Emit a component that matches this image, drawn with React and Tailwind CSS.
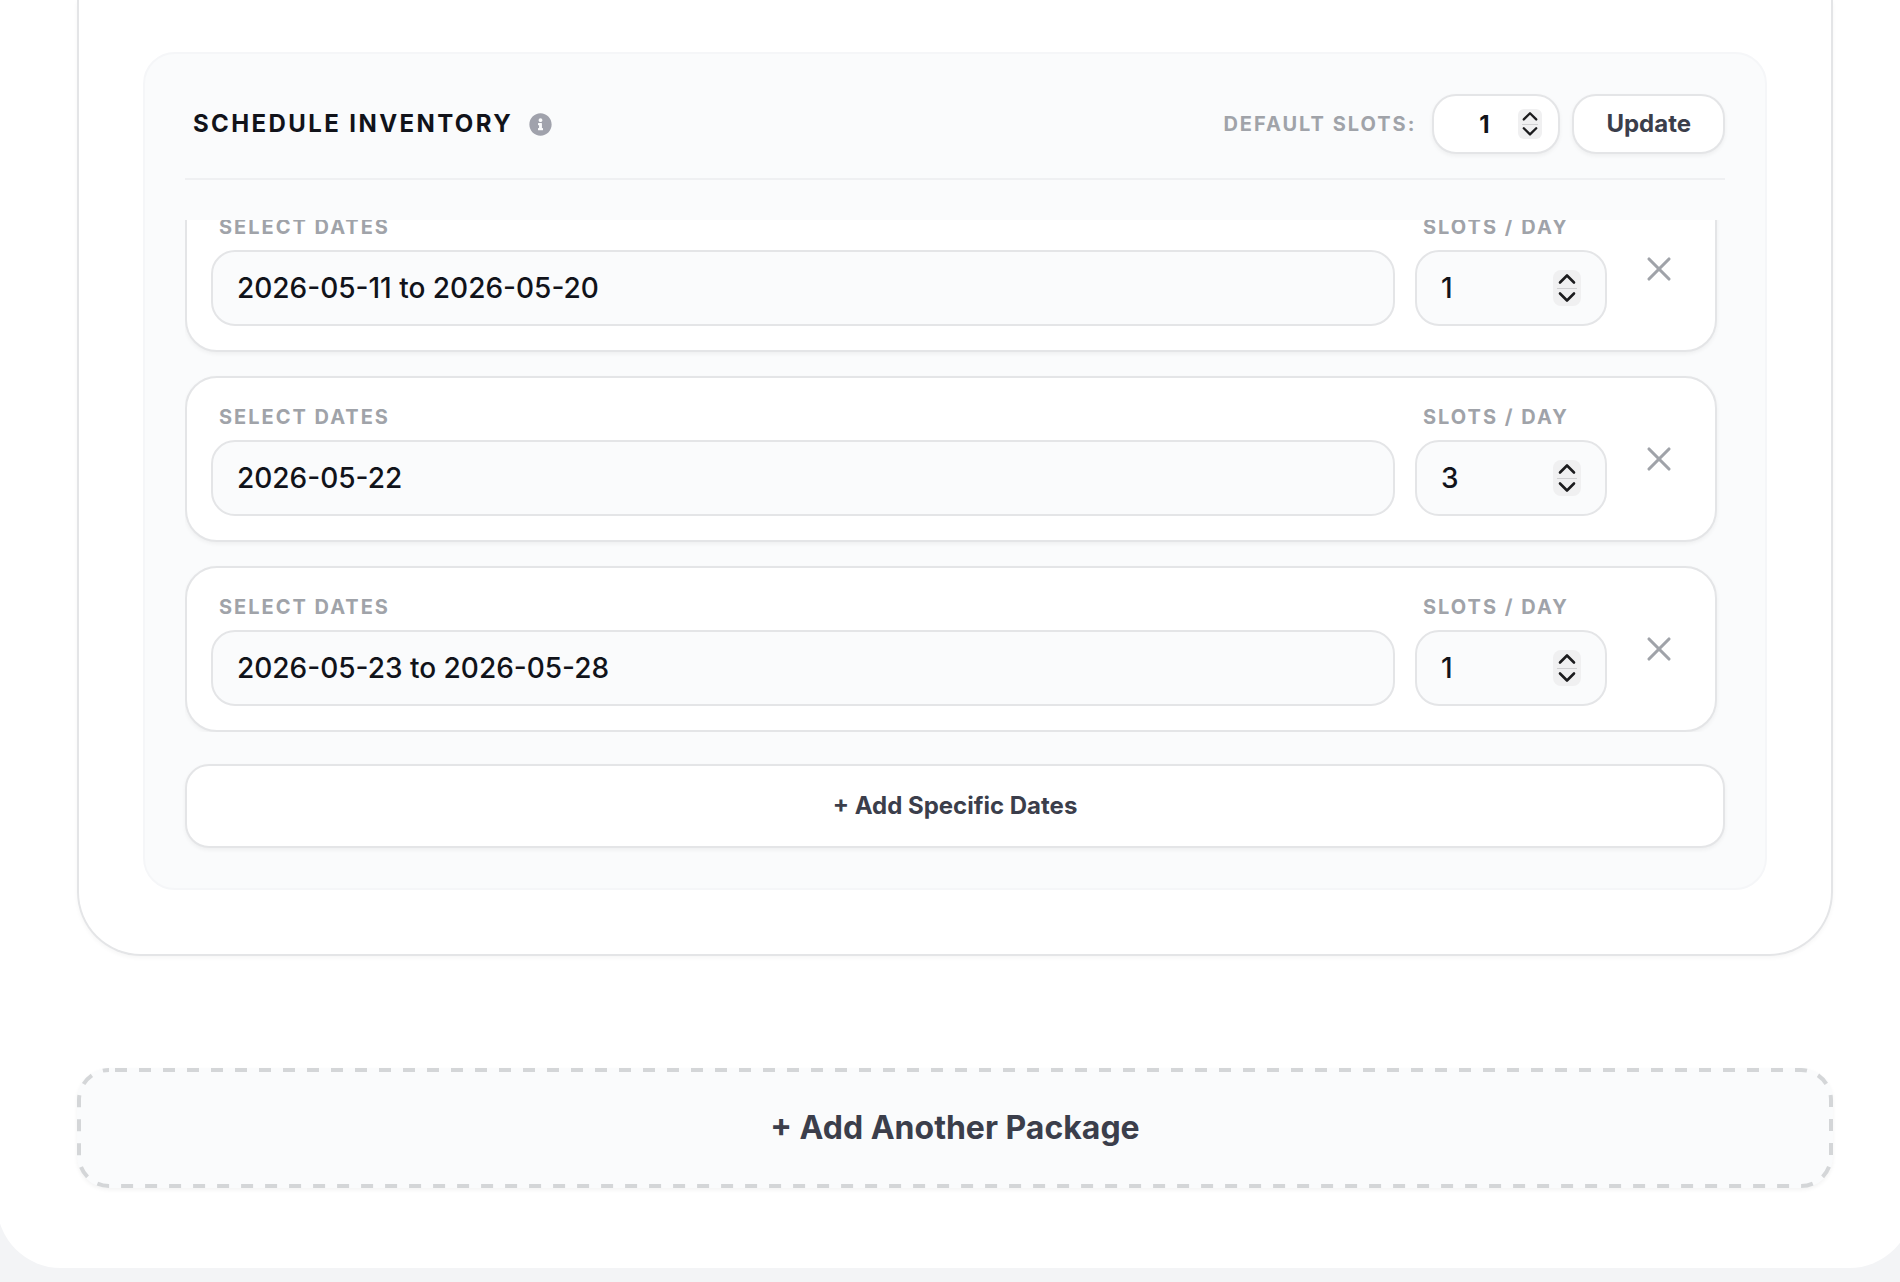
import React, { useState } from "react";
import { X } from "lucide-react";
import { FaInfoCircle } from "react-icons/fa";

const INITIAL_ROWS = [
  { id: 1, dates: "2026-05-11 to 2026-05-20", slots: 1 },
  { id: 2, dates: "2026-05-22", slots: 3 },
  { id: 3, dates: "2026-05-23 to 2026-05-28", slots: 1 },
];

const hideNativeSpin =
  "[appearance:textfield] [&::-webkit-inner-spin-button]:appearance-none [&::-webkit-outer-spin-button]:appearance-none";

// ==========================
// STEPPER (up / down)
// ==========================
function Stepper({ onStep, large = false }) {
  return (
    <div
      className={`absolute top-1/2 -translate-y-1/2 flex flex-col bg-[#f0f0f1] text-[#1c1c1e] ${
        large ? "right-[26px] w-7 h-9 rounded-lg" : "right-[18px] w-6 h-[30px] rounded-md"
      }`}
    >
      <button
        type="button"
        aria-label="Increase"
        onClick={() => onStep(1)}
        className="flex-1 flex items-center justify-center"
      >
        <svg viewBox="0 0 18 12" className={large ? "w-[18px]" : "w-4"} fill="none">
          <path d="M2 9.5l7-7 7 7" stroke="currentColor" strokeWidth="2.6" strokeLinecap="round" strokeLinejoin="round" />
        </svg>
      </button>
      <div className={`h-px mx-auto bg-[#d0d0d2] ${large ? "w-5" : "w-4"}`} />
      <button
        type="button"
        aria-label="Decrease"
        onClick={() => onStep(-1)}
        className="flex-1 flex items-center justify-center"
      >
        <svg viewBox="0 0 18 12" className={large ? "w-[18px]" : "w-4"} fill="none">
          <path d="M2 2.5l7 7 7-7" stroke="currentColor" strokeWidth="2.6" strokeLinecap="round" strokeLinejoin="round" />
        </svg>
      </button>
    </div>
  );
}

// ==========================
// DATE ROW
// ==========================
function DateRow({ row, onChange, onRemove }) {
  return (
    <div className="shrink-0 flex items-center gap-5 p-6 bg-white border-2 border-[#e4e5e7] rounded-[32px] shadow-[0_2px_4px_rgba(0,0,0,0.05)]">
      <div className="flex-1 min-w-0">
        <label
          htmlFor={`dates-${row.id}`}
          className="block pl-2 mb-2 text-[20px] leading-[30px] font-bold tracking-widest uppercase text-[#a0a3a9]"
        >
          Select Dates
        </label>
        <input
          id={`dates-${row.id}`}
          type="text"
          value={row.dates}
          onChange={(e) => onChange({ ...row, dates: e.target.value })}
          className="block w-full h-[76px] px-6 bg-[#fafbfc] border-2 border-[#e4e5e7] rounded-3xl text-[28px] font-medium text-[#11131a] outline-none"
        />
      </div>

      <div className="w-48">
        <label
          htmlFor={`slots-${row.id}`}
          className="block pl-2 mb-2 text-[20px] leading-[30px] font-bold tracking-widest uppercase text-[#a0a3a9]"
        >
          Slots / Day
        </label>
        <div className="relative">
          <input
            id={`slots-${row.id}`}
            type="number"
            min="1"
            value={row.slots}
            onChange={(e) => onChange({ ...row, slots: Number(e.target.value) })}
            className={`block w-full h-[76px] px-6 bg-[#fafbfc] border-2 border-[#e4e5e7] rounded-3xl text-[28px] font-medium text-[#11131a] outline-none ${hideNativeSpin}`}
          />
          <Stepper
            large
            onStep={(n) => onChange({ ...row, slots: Math.max(1, row.slots + n) })}
          />
        </div>
      </div>

      <button
        type="button"
        aria-label="Remove dates"
        onClick={() => onRemove(row.id)}
        className="w-16 h-16 flex items-center justify-center text-[#a0a3a9]"
      >
        <X size={40} strokeWidth={1.9} />
      </button>
    </div>
  );
}

function App() {
  const [rows, setRows] = useState(INITIAL_ROWS);
  const [defaultSlots, setDefaultSlots] = useState(1);

  const changeRow = (next) =>
    setRows((prev) => prev.map((r) => (r.id === next.id ? next : r)));
  const removeRow = (id) => setRows((prev) => prev.filter((r) => r.id !== id));
  const addRow = () =>
    setRows((prev) => [...prev, { id: Date.now(), dates: "", slots: defaultSlots }]);

  return (
    <div className="min-h-screen overflow-hidden bg-[#f3f4f6] font-['Inter',sans-serif]">
      <div className="-ml-[3px] -mr-[13px] px-20 pb-20 bg-white rounded-b-[64px]">
        {/* Package card */}
        <section className="px-16 pb-16 pt-[52px] border-2 border-t-0 border-[#e4e5e7] rounded-b-[64px] shadow-[0_2px_4px_rgba(0,0,0,0.04)]">
          <div className="p-10 bg-[#fafbfc] border-2 border-[#f5f6f8] rounded-[32px]">
            {/* Header */}
            <div className="flex items-center justify-between pb-6 mb-10 border-b-2 border-[#eff0f2]">
              <div className="flex items-center gap-4 pl-2">
                <h2 className="text-2xl font-bold tracking-widest uppercase text-[#11131a]">
                  Schedule Inventory
                </h2>
                <FaInfoCircle size={23} className="text-[#a0a2ac]" />
              </div>

              <div className="flex items-center gap-3">
                <label
                  htmlFor="default-slots"
                  className="mr-1 text-[20px] font-bold tracking-widest uppercase text-[#a0a3a9]"
                >
                  Default Slots:
                </label>
                <div className="relative w-32">
                  <input
                    id="default-slots"
                    type="number"
                    min="1"
                    value={defaultSlots}
                    onChange={(e) => setDefaultSlots(Number(e.target.value))}
                    className={`block w-full h-[60px] pl-4 pr-10 bg-white border-2 border-[#e4e5e7] rounded-3xl text-2xl font-bold text-center text-[#11131a] shadow-[0_2px_4px_rgba(0,0,0,0.05)] outline-none ${hideNativeSpin}`}
                  />
                  <Stepper onStep={(n) => setDefaultSlots((v) => Math.max(1, v + n))} />
                </div>
                <button
                  type="button"
                  onClick={() => setRows((prev) => prev.map((r) => ({ ...r, slots: defaultSlots })))}
                  className="h-[60px] px-8 bg-white border-2 border-[#e4e5e7] rounded-3xl text-2xl font-bold text-[#3b3e4b] shadow-[0_2px_4px_rgba(0,0,0,0.05)]"
                >
                  Update
                </button>
              </div>
            </div>

            {/* Rows, anchored to the latest entry */}
            <div className="h-[512px] overflow-hidden flex flex-col justify-end gap-6 pr-2">
              {rows.map((row) => (
                <DateRow key={row.id} row={row} onChange={changeRow} onRemove={removeRow} />
              ))}
            </div>

            <button
              type="button"
              onClick={addRow}
              className="block w-full h-[84px] mt-8 bg-white border-2 border-[#e4e5e7] rounded-3xl text-2xl font-bold text-[#3b3e4b] shadow-[0_2px_4px_rgba(0,0,0,0.05)]"
            >
              + Add Specific Dates
            </button>
          </div>
        </section>

        <button
          type="button"
          className="relative block w-full h-[120px] mt-28 bg-[#fafbfc] rounded-[32px] text-[32px] font-bold text-[#3b3e4b] shadow-[0_2px_4px_rgba(0,0,0,0.05)]"
        >
          {/* Dashed outline, wider dashes than border-dashed gives */}
          <svg className="absolute inset-0 w-full h-full p-0.5 overflow-visible" fill="none" aria-hidden="true">
            <rect
              width="100%"
              height="100%"
              rx="30"
              stroke="#d4d6d8"
              strokeWidth="4"
              strokeDasharray="12 12"
              strokeDashoffset="-6"
            />
          </svg>
          + Add Another Package
        </button>
      </div>
    </div>
  );
}

export default App;
